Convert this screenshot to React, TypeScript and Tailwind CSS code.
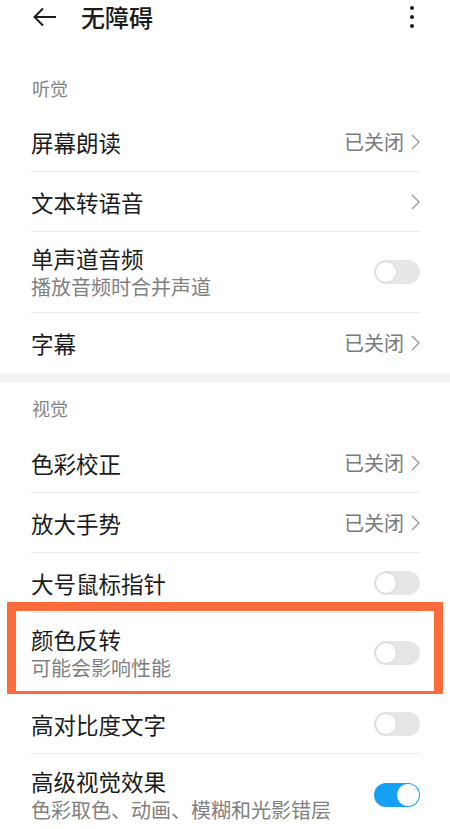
import React from 'react';

type Item = {
    title: string;
    sub?: string;
    value?: string;
    arrow?: boolean;
    toggle?: boolean;
    on?: boolean;
    highlight?: boolean;
};

const hearing: Item[] = [
    { title: '屏幕朗读', value: '已关闭', arrow: true },
    { title: '文本转语音', arrow: true },
    { title: '单声道音频', sub: '播放音频时合并声道', toggle: true },
    { title: '字幕', value: '已关闭', arrow: true },
];

const vision: Item[] = [
    { title: '色彩校正', value: '已关闭', arrow: true },
    { title: '放大手势', value: '已关闭', arrow: true },
    { title: '大号鼠标指针', toggle: true },
    { title: '颜色反转', sub: '可能会影响性能', toggle: true, highlight: true },
    { title: '高对比度文字', toggle: true },
    { title: '高级视觉效果', sub: '色彩取色、动画、模糊和光影错层', toggle: true, on: true },
];

function Toggle({ on }: { on?: boolean }) {
    if (on) {
        return (
            <div className="w-[46px] h-[24px] rounded-full bg-[#16a2f4] flex items-center justify-end px-[1px]">
                <div className="w-[22px] h-[22px] rounded-full bg-white" />
            </div>
        );
    }
    return (
        <div className="w-[46px] h-[24px] rounded-full bg-[#e6e6e6] flex items-center px-[1px]">
            <div className="w-[22px] h-[22px] rounded-full bg-white border border-[#d6d6d6]" />
        </div>
    );
}

function Chevron() {
    return (
        <svg width="9" height="16" viewBox="0 0 9 16" className="ml-[7px]">
            <path d="M1 1 L8 8 L1 15" fill="none" stroke="#9a9a9a" strokeWidth="1.4" />
        </svg>
    );
}

function Row({ item, last }: { item: Item; last?: boolean }) {
    const tall = !!item.sub;
    return (
        <div className="relative bg-white pl-[31px] pr-[30px]">
            <div
                className={
                    'flex items-center justify-between ' +
                    (tall ? 'h-[81px] ' : 'h-[60px] ') +
                    (last ? '' : 'border-b border-[#e9e9e9]')
                }
            >
                <div className="flex flex-col">
                    <span className="text-[22.5px] leading-[30px] text-[#1b1b1b]">{item.title}</span>
                    {item.sub && (
                        <span className="text-[20px] leading-[28px] text-[#808080]">{item.sub}</span>
                    )}
                </div>
                <div className="flex items-center">
                    {item.value && <span className="text-[20px] text-[#7a7a7a]">{item.value}</span>}
                    {item.arrow && <Chevron />}
                    {item.toggle && <Toggle on={item.on} />}
                </div>
            </div>
            {item.highlight && (
                <div className="absolute left-[7px] right-[7px] top-[-11px] bottom-[-6px] border-[9px] border-[#fd6b3c] pointer-events-none" />
            )}
        </div>
    );
}

export default function App() {
    return (
        <div
            className="w-[450px] h-[829px] overflow-hidden bg-white"
            style={{ fontFamily: '"Noto Sans CJK SC", "Noto Sans", sans-serif' }}
        >
            <div className="h-[34px] flex items-center pl-[33px] pr-[36px]">
                <svg width="24" height="20" viewBox="0 0 24 20">
                    <path d="M23 10 H2 M10 1.5 L1.5 10 L10 18.5" fill="none" stroke="#1b1b1b" strokeWidth="2" />
                </svg>
                <span className="ml-[24px] text-[24px] font-medium text-[#1b1b1b]">无障碍</span>
                <div className="ml-auto flex flex-col gap-[5px] items-center">
                    <div className="w-[4px] h-[4px] rounded-full bg-[#1b1b1b]" />
                    <div className="w-[4px] h-[4px] rounded-full bg-[#1b1b1b]" />
                    <div className="w-[4px] h-[4px] rounded-full bg-[#1b1b1b]" />
                </div>
            </div>

            <div className="h-[78px] pt-[30px] pl-[32px] flex items-center text-[18px] text-[#858585]">听觉</div>
            {hearing.map((item, i) => (
                <Row key={item.title} item={item} last={i === hearing.length - 1} />
            ))}

            <div className="h-[10px] bg-[#f3f3f3]" />

            <div className="h-[50px] pl-[32px] flex items-center text-[18px] text-[#858585]">视觉</div>
            {vision.map((item, i) => (
                <Row key={item.title} item={item} last={i === vision.length - 1} />
            ))}
        </div>
    );
}
